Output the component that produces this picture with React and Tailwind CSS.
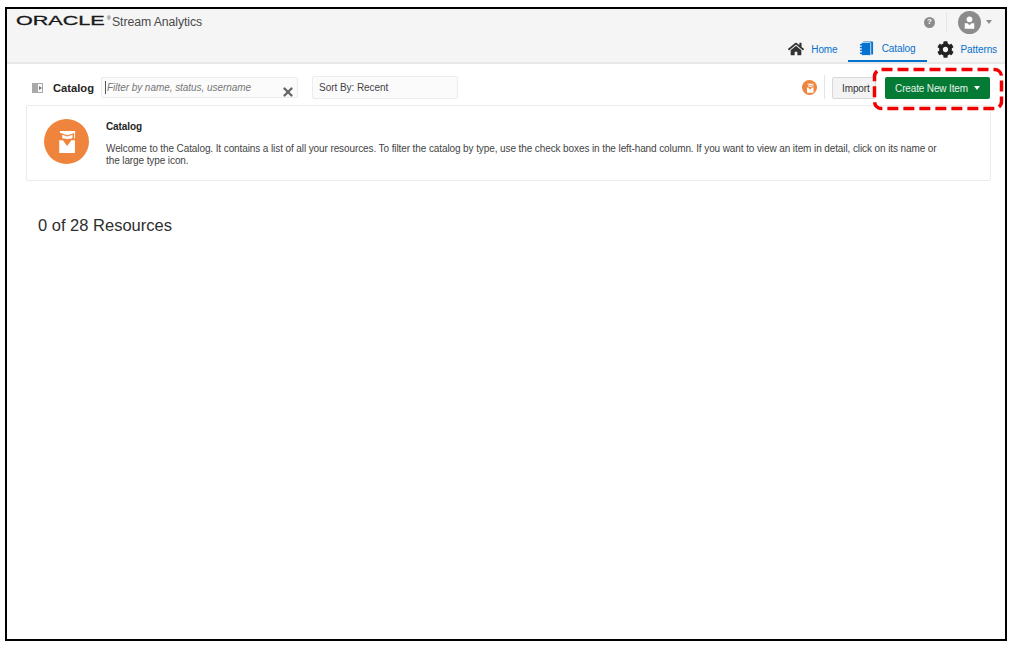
import { X } from "lucide-react";
import { FaCog, FaHome } from "react-icons/fa";

const font = { fontFamily: '"Liberation Sans", Arial, sans-serif' };

function GradIcon({ className }) {
  return (
    <svg viewBox="0 0 24 24" className={className} fill="#fff">
      <path d="M6.500 3.300h12.700v1.400l-6.300 2.100-6.400-2.100z" />
      <path d="M18.300 5h.8v4.500h-.8z" />
      <path d="M8.500 6.500l4.300 1.400 4.200-1.400v2.700c-2 1-6.500 1-8.500 0z" />
      <path d="M6 11h3l3.500 4.700L16 11h3v10.500H6z" />
    </svg>
  );
}

function UserIcon() {
  return (
    <div className="flex h-[23px] w-[23px] items-center justify-center rounded-full bg-[#8c8c8c]">
      <svg viewBox="0 0 24 24" className="h-[19px] w-[19px]" fill="#fff">
        <circle cx="12" cy="8" r="3.600" />
        <path d="M6 13h3.500l2.500 2.500 2.500-2.500H18v7H6z" />
      </svg>
    </div>
  );
}

function CatalogTabIcon() {
  return (
    <svg viewBox="0 0 16 16" className="h-[15px] w-[15px]">
      <rect x="4" y="0.500" width="11" height="14" rx="1" fill="#0572ce" />
      <rect x="2.500" y="1.500" width="10" height="14" rx="1" fill="#0572ce" stroke="#fff" strokeWidth="0.800" />
      <path d="M1 4h3M1 7h3M1 10h3M1 13h3" stroke="#0572ce" strokeWidth="1.500" />
    </svg>
  );
}

export default function App() {
  return (
    <div style={font} className="relative h-[646px] w-[1012px] overflow-hidden bg-white pl-[5px] pt-[7px]">
      <div className="h-[634px] w-[1002px] border-2 border-black bg-white">
        {/* top header */}
        <header className="h-[55px] border-b-2 border-[#e8e8e8] bg-[#f5f5f5]">
          <div className="flex h-[26px] items-center justify-between pl-[9px] pr-[13px]">
            <div className="flex items-center">
              <span className="mb-[4px] w-[70px] origin-left scale-x-[1.66] text-[13px] leading-none text-[#1a1a1a] [-webkit-text-stroke:0.3px_#1a1a1a]">
                ORACLE
              </span>
              <span className="mb-[8px] ml-[21px] w-[5px] text-[5px] leading-none text-[#1a1a1a]">®</span>
              <span className="text-[12.300px] tracking-[-0.1px] text-[#4a4a4a]">Stream Analytics</span>
            </div>
            <div className="flex items-center">
              <div className="flex h-[11px] w-[11px] items-center justify-center rounded-full bg-[#8c8c8c] text-[8px] font-bold text-white">?</div>
              <div className="ml-[11px] mr-[11px] h-[20px] w-px bg-[#e6e6e6]" />
              <UserIcon />
              <div className="ml-[5px] h-0 w-0 border-x-[3.500px] border-t-[4px] border-x-transparent border-t-[#8c8c8c]" />
            </div>
          </div>
          <nav className="flex h-[27px] items-start justify-end pr-[8px] text-[10px] tracking-[-0.1px] text-[#0572ce]">
            <div className="mr-[10px] flex h-[28px] items-center">
              <FaHome size={16} className="mr-[7px] text-[#333]" />
              <span>Home</span>
            </div>
            <div className="flex h-[27px] w-[79px] items-center justify-center border-b-2 border-[#0572ce] pt-[2px]">
              <CatalogTabIcon />
              <span className="ml-[8px]">Catalog</span>
            </div>
            <div className="ml-[10px] flex h-[28px] items-center">
              <FaCog size={17} className="mr-[7px] text-[#222]" />
              <span>Patterns</span>
            </div>
          </nav>
        </header>

        {/* toolbar */}
        <div className="flex h-[41px] items-start pl-[25px] pr-[15px] pt-[13px]">
          <div className="mt-[6px] flex h-[10px] w-[11px] items-center overflow-hidden border border-[#aaa] bg-[#f8f8f8]">
            <div className="h-full w-[5px] bg-[#aaa]" />
            <div className="ml-[1px] h-0 w-0 border-y-[2px] border-l-[3px] border-y-transparent border-l-[#777]" />
          </div>
          <span className="ml-[10px] mt-[3px] text-[11.200px] font-bold leading-[16px] text-[#252525]">Catalog</span>
          <div className="relative ml-[7px] flex h-[21px] w-[197px] items-center rounded-[2px] border border-[#ececec] bg-[#fbfbfb] pl-[3px]">
            <span className="mr-[1px] h-[13px] w-px bg-[#555]" />
            <span className="text-[10px] italic tracking-[-0.05px] text-[#777]">Filter by name, status, username</span>
            <X size={14} strokeWidth={4} className="absolute bottom-[-2px] right-[2px] text-[#666]" />
          </div>
          <div className="ml-[14px] mt-[-1px] flex h-[23px] w-[146px] items-center rounded-[2px] border border-[#ececec] bg-[#fbfbfb] pl-[6px] text-[10px] tracking-[-0.05px] text-[#444]">
            Sort By: Recent
          </div>
          <div className="ml-auto mt-[3px] flex h-[15px] w-[15px] items-center justify-center rounded-full bg-[#ef843c]">
            <GradIcon className="h-[12px] w-[12px]" />
          </div>
          <div className="ml-[7px] mt-[-2px] h-[24px] w-px bg-[#e4e4e4]" />
          <div className="ml-[7px] flex h-[22px] w-[44px] items-center rounded-[2px] border border-[#d8d8d8] bg-[#f3f3f3] pl-[9px] text-[10px] tracking-[-0.1px] text-[#333]">
            Import
          </div>
          <div className="ml-[9px] flex h-[22px] w-[105px] items-center justify-center rounded-[2px] bg-[#047a34] text-[10px] tracking-[-0.15px] text-[#e6f2ea]">
            Create New Item
            <span className="ml-[6px] h-0 w-0 border-x-[3.500px] border-t-[4px] border-x-transparent border-t-white" />
          </div>
        </div>

        {/* intro card */}
        <section className="ml-[19px] flex h-[76px] w-[965px] rounded-[2px] border border-[#ebebeb] bg-white">
          <div className="ml-[17px] mt-[13px] flex h-[45px] w-[45px] shrink-0 items-center justify-center rounded-full bg-[#ef843c]">
            <GradIcon className="h-[29px] w-[29px]" />
          </div>
          <div className="ml-[17px] mt-[15px] w-[840px] text-[10px] leading-[12px] tracking-[-0.1px] text-[#444]">
            <h2 className="font-bold text-[#252525]">Catalog</h2>
            <p className="mt-[10px]">
              Welcome to the Catalog. It contains a list of all your resources. To filter the catalog by type, use the check boxes in the left-hand column. If you want to view an item in detail, click on its name or the large type icon.
            </p>
          </div>
        </section>

        <h1 className="ml-[31px] mt-[34px] text-[16.500px] leading-[20px] text-[#2e2e2e]">0 of 28 Resources</h1>
      </div>

      {/* red callout round the create button */}
      <svg className="absolute left-[872px] top-[67px]" width="132" height="44" fill="none">
        <rect x="2.500" y="2.500" width="127" height="39" rx="7" stroke="#f00000" strokeWidth="3.500" strokeDasharray="11 5" />
      </svg>
    </div>
  );
}
